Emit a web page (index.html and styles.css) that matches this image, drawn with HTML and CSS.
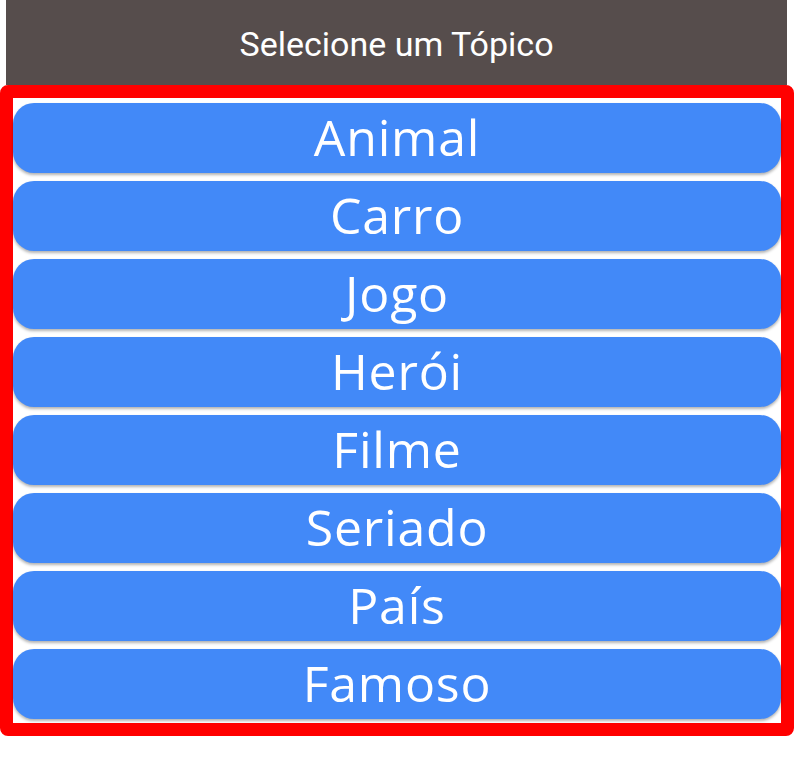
FILE: index.html
```html
<!DOCTYPE html>
<html lang="pt">
<head>
<meta charset="utf-8">
<title>Selecione um Tópico</title>
<link rel="stylesheet" href="styles.css">
</head>
<body>
<header class="topbar">
  <h1 class="topbar-title">Selecione um Tópico</h1>
</header>
<main class="topics">
  <button class="topic">Animal</button>
  <button class="topic">Carro</button>
  <button class="topic">Jogo</button>
  <button class="topic">Herói</button>
  <button class="topic">Filme</button>
  <button class="topic">Seriado</button>
  <button class="topic">País</button>
  <button class="topic">Famoso</button>
</main>
</body>
</html>
```
FILE: styles.css
```css
* {
  box-sizing: border-box;
}

html, body {
  margin: 0;
  padding: 0;
  background: #ffffff;
}

body {
  width: 794px;
  font-family: Roboto, "Liberation Sans", sans-serif;
}

.topbar {
  height: 85px;
  margin: 0 7px 0 6px;
  background: #564d4c;
  display: flex;
  align-items: center;
  justify-content: center;
}

.topbar-title {
  margin: 0;
  color: #ffffff;
  font-family: Roboto, sans-serif;
  font-weight: 400;
  font-size: 34px;
  line-height: 1;
  padding-top: 2px;
}

.topics {
  height: 651px;
  border: 13px solid #ff0000;
  border-radius: 8px;
  padding: 5px 0 3px;
  display: flex;
  flex-direction: column;
  gap: 8px;
}

.topic {
  height: 70px;
  flex: none;
  border: none;
  border-radius: 21px;
  background: #4289f8;
  color: #ffffff;
  font-family: "Open Sans", sans-serif;
  font-weight: 500;
  font-size: 50px;
  letter-spacing: 0.8px;
  line-height: 1;
  padding: 0 0 2px;
  box-shadow: 0 2px 3px rgba(0, 0, 0, 0.3);
  cursor: pointer;
}
```
